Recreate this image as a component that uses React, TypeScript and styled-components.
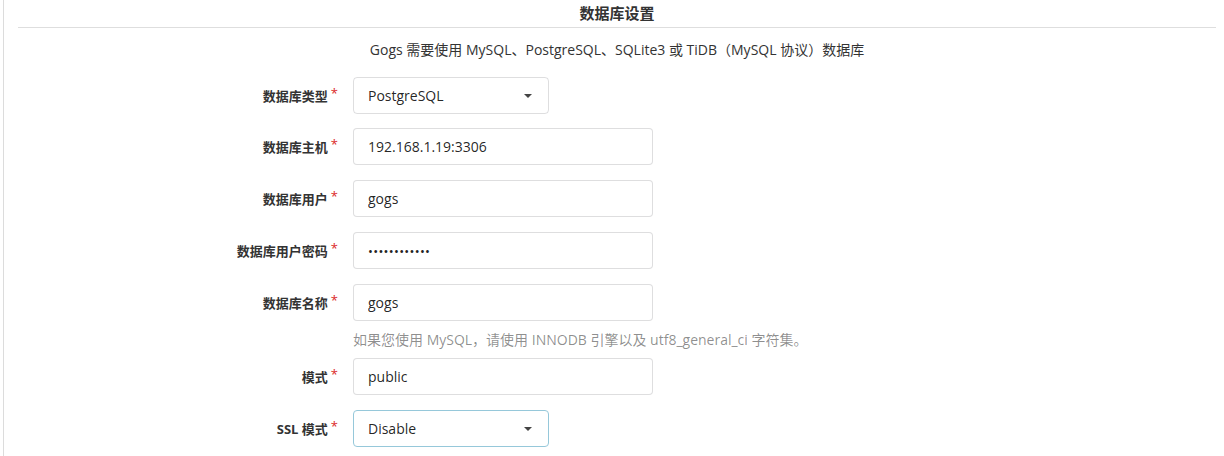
import React from "react";
import styled, { createGlobalStyle } from "styled-components";

const GlobalStyle = createGlobalStyle`
  html, body {
    margin: 0;
    padding: 0;
    background: #fff;
  }
  body {
    font-family: "Open Sans", "Noto Sans CJK SC", sans-serif;
    color: rgba(0, 0, 0, 0.87);
  }
`;

const Segment = styled.div`
  margin-left: 3px;
  border-left: 1px solid #dcdcdc;
  padding: 0 8px 0 14px;
  min-height: 456px;
  box-sizing: border-box;
`;

const Title = styled.h3`
  margin: 0;
  height: 27px;
  line-height: 27px;
  border-bottom: 1px solid #dedede;
  text-align: center;
  font-size: 15px;
  font-weight: 700;
  color: #333;
`;

const Intro = styled.p`
  margin: 12px 0 17px;
  line-height: 20px;
  text-align: center;
  font-size: 14px;
  color: #333;
`;

const Field = styled.div<{ $gap?: number }>`
  display: flex;
  align-items: center;
  margin-bottom: ${(p) => (p.$gap ?? 15)}px;
`;

const Label = styled.label`
  width: 335px;
  padding-right: 15px;
  box-sizing: border-box;
  text-align: right;
  font-size: 13px;
  font-weight: 700;
  color: #333;
`;

const Star = styled.span`
  position: relative;
  top: -3px;
  margin-left: 3px;
  color: #db2828;
  font-weight: 400;
`;

const Input = styled.input`
  width: 300px;
  height: 37px;
  box-sizing: border-box;
  padding: 0 14px;
  border: 1px solid rgba(34, 36, 38, 0.15);
  border-radius: 4px;
  font-family: inherit;
  font-size: 14px;
  color: rgba(0, 0, 0, 0.87);
  outline: none;
  &[type="password"] {
    font-size: 13px;
    letter-spacing: 0.3px;
    color: #222;
  }
`;

const Select = styled.div<{ $active?: boolean }>`
  width: 196px;
  height: 37px;
  box-sizing: border-box;
  padding: 0 16px 0 14px;
  display: flex;
  align-items: center;
  justify-content: space-between;
  border: 1px solid ${(p) => (p.$active ? "#96c8da" : "rgba(34, 36, 38, 0.15)")};
  border-radius: 4px;
  font-size: 14px;
  color: rgba(0, 0, 0, 0.87);
`;

const Caret = styled.span`
  width: 0;
  height: 0;
  border-left: 4px solid transparent;
  border-right: 4px solid transparent;
  border-top: 4px solid #444;
`;

const Help = styled.div`
  margin: 9px 0 8px 335px;
  line-height: 20px;
  font-size: 14px;
  color: rgba(0, 0, 0, 0.45);
`;

const Req = ({ children }: { children: React.ReactNode }) => (
  <Label>
    {children}
    <Star>*</Star>
  </Label>
);

export default function App() {
  return (
    <>
      <GlobalStyle />
      <Segment>
        <Title>数据库设置</Title>
        <Intro>Gogs 需要使用 MySQL、PostgreSQL、SQLite3 或 TiDB（MySQL 协议）数据库</Intro>

        <Field $gap={14}>
          <Req>数据库类型</Req>
          <Select>
            PostgreSQL
            <Caret />
          </Select>
        </Field>
        <Field>
          <Req>数据库主机</Req>
          <Input readOnly value="192.168.1.19:3306" />
        </Field>
        <Field>
          <Req>数据库用户</Req>
          <Input readOnly value="gogs" />
        </Field>
        <Field>
          <Req>数据库用户密码</Req>
          <Input readOnly type="password" value="gogspassword" />
        </Field>
        <Field $gap={0}>
          <Req>数据库名称</Req>
          <Input readOnly value="gogs" />
        </Field>
        <Help>如果您使用 MySQL，请使用 INNODB 引擎以及 utf8_general_ci 字符集。</Help>
        <Field>
          <Req>模式</Req>
          <Input readOnly value="public" />
        </Field>
        <Field>
          <Req>SSL 模式</Req>
          <Select $active>
            Disable
            <Caret />
          </Select>
        </Field>
      </Segment>
    </>
  );
}
